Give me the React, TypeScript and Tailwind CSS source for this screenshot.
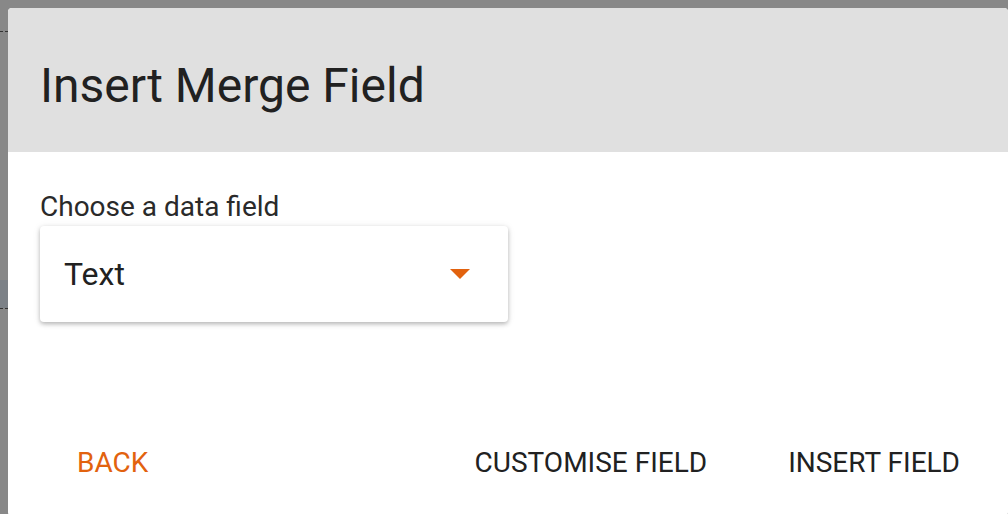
// Insert Merge Field dialog — modal over a dimmed page.

const ORANGE = "text-[#e2620e]";

function DropdownArrow() {
  return (
    <svg width="20" height="10" viewBox="0 0 20 10" className="shrink-0">
      <path d="M0 0 L20 0 L10 10 Z" fill="#e2620e" />
    </svg>
  );
}

export default function App() {
  return (
    <div
      className="relative h-[514px] w-[1008px] overflow-hidden bg-[#888888] pl-2 pt-2"
      style={{ fontFamily: "Roboto, 'Noto Sans', sans-serif" }}
    >
      {/* bits of the page behind the backdrop */}
      <div className="absolute left-0 top-[31px] h-0 w-2 border-t border-dashed border-[#333]" />
      <div className="absolute left-0 top-[280px] h-[28px] w-2 bg-[#7c8187]" />
      <div className="absolute left-0 top-[308px] h-0 w-2 border-t border-dashed border-[#333]" />

      <div className="flex h-[508px] w-[1000px] flex-col overflow-hidden rounded bg-white">
        <div className="flex h-[144px] items-center bg-[#e0e0e0] pl-8">
          <h1 className="pt-[12px] text-[48px] font-normal leading-none text-[#212121]">
            Insert Merge Field
          </h1>
        </div>

        <div className="flex flex-1 flex-col px-8 pt-[38px]">
          <label className="text-[28px] leading-[34px] text-[#2a2a2a]">
            Choose a data field
          </label>
          <div className="mt-[2px] flex h-[96px] w-[468px] items-center justify-between rounded bg-white pl-6 pr-[38px] shadow-[0_2px_4px_rgba(0,0,0,0.25),0_1px_8px_rgba(0,0,0,0.08)]">
            <span className="text-[32px] text-[#212121]">Text</span>
            <DropdownArrow />
          </div>

          <div className="mt-auto flex items-center pb-[39px]">
            <button className={`ml-[37px] text-[28px] uppercase leading-none ${ORANGE}`}>
              Back
            </button>
            <div className="ml-auto flex items-center gap-[81px] pr-[16px]">
              <button className="text-[28px] uppercase leading-none text-[#212121]">
                Customise Field
              </button>
              <button className="text-[28px] uppercase leading-none text-[#212121]">
                Insert Field
              </button>
            </div>
          </div>
        </div>
      </div>
    </div>
  );
}
